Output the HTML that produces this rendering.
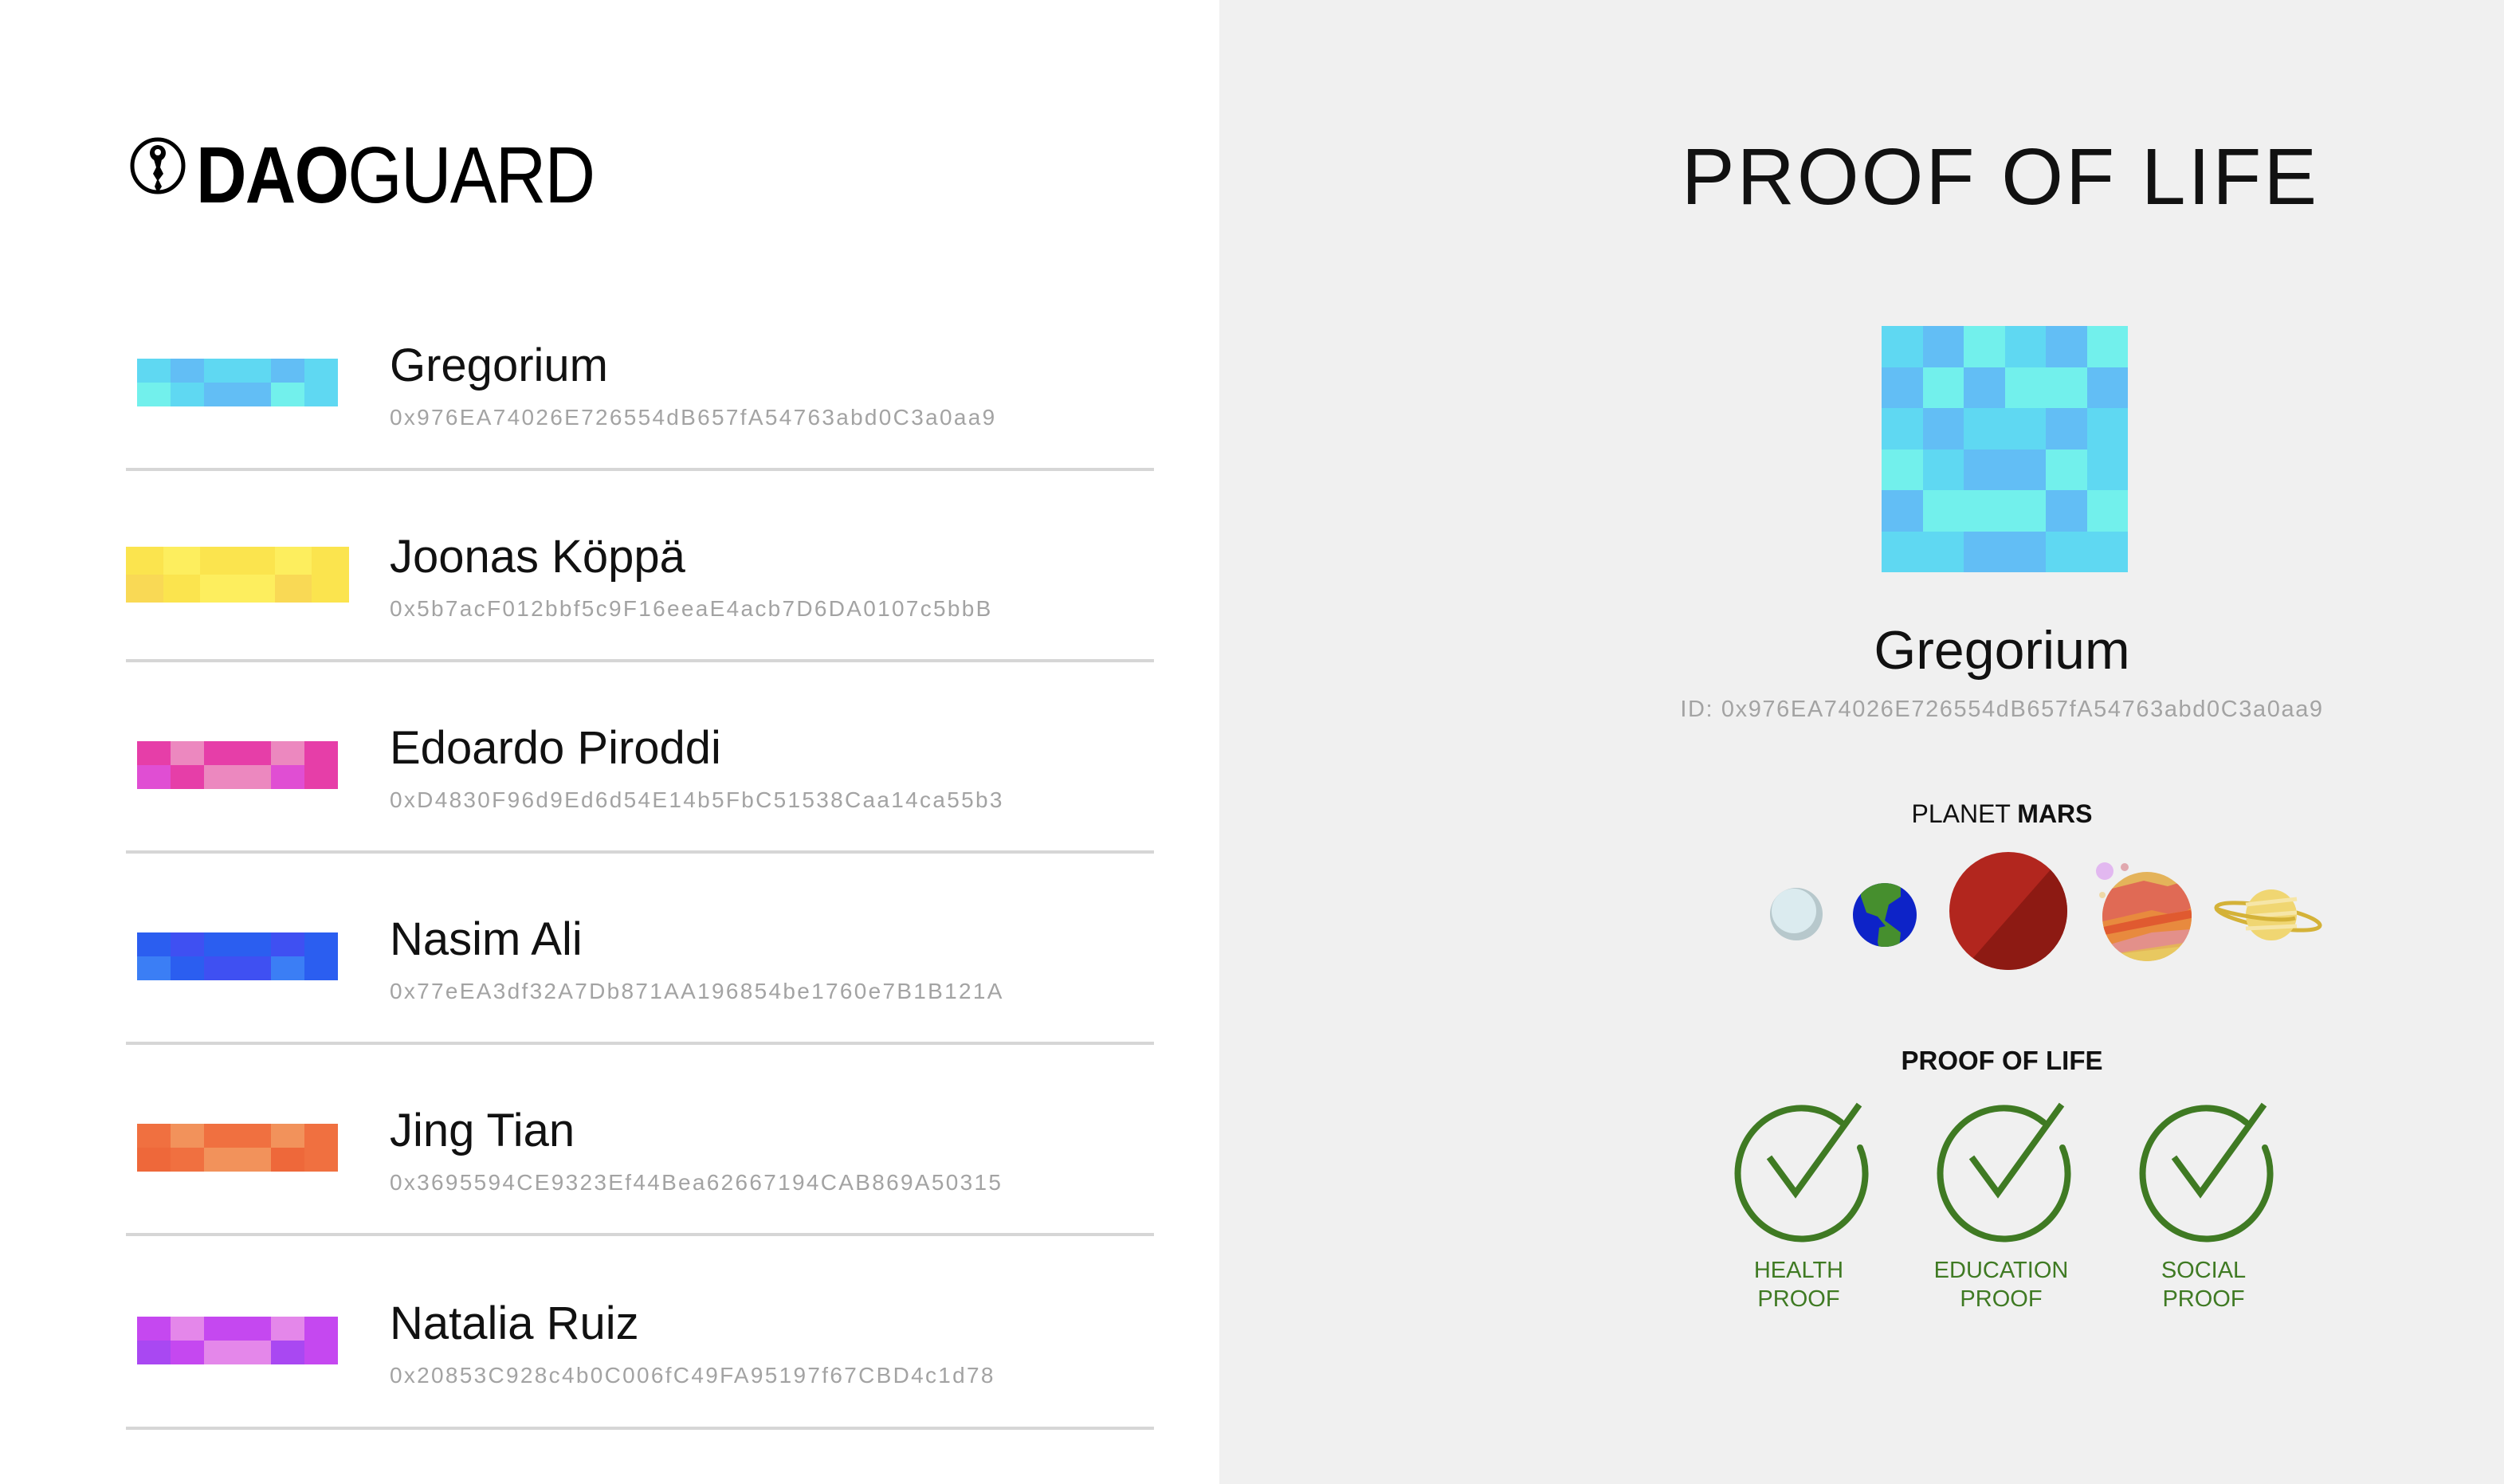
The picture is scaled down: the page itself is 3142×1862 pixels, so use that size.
<!DOCTYPE html>
<html><head><meta charset="utf-8"><style>
*{margin:0;padding:0;box-sizing:border-box}
body{width:3142px;height:1862px;position:relative;background:#fff;font-family:"Liberation Sans",sans-serif;overflow:hidden}
.right{position:absolute;left:1530px;top:0;width:1612px;height:1862px;background:#f0f0f0}
.a{position:absolute}
.t{position:absolute;line-height:1;white-space:nowrap}
.name{font-size:58px;color:#111;left:489px}
.addr{font-size:28px;color:#a3a3a3;left:489px;letter-spacing:2.3px}
.line{position:absolute;left:158px;width:1290px;height:4px;background:#d6d6d6}
.grid{position:absolute;display:grid}
.grid div{width:100%;height:100%}
.c{text-align:center;transform:translateX(-50%)}
.lbl{font-size:29px;color:#3f7a23;text-align:center;line-height:36px;transform:translateX(-50%)}
</style></head><body>
<div class="right"></div>

<!-- logo -->
<svg class="a" style="left:160px;top:170px" width="80" height="80" viewBox="0 0 80 80">
<ellipse cx="38" cy="38" rx="32" ry="33" fill="none" stroke="#000" stroke-width="5"/>
<circle cx="38" cy="22" r="10" fill="#000"/>
<circle cx="38" cy="21" r="4" fill="#fff"/>
<path d="M33 30 L43 30 L41 40 L45 48 L39 56 L43 64 L38 72 L34 64 L37 56 L32 48 L36 40 Z" fill="#000"/>
</svg>
<div class="t" style="left:246px;top:170px;font-size:100px;letter-spacing:-2px;transform:scaleX(0.88);transform-origin:0 0"><b>DAO</b>GUARD</div>

<!-- rows -->
<div class="grid" style="left:172px;top:450px;width:252px;height:60px;grid-template-columns:repeat(6,1fr);grid-template-rows:1fr 1fr">
<div style="background:#5fd8f2"></div><div style="background:#62bef5"></div><div style="background:#5fd8f2"></div><div style="background:#5fd8f2"></div><div style="background:#62bef5"></div><div style="background:#5fd8f2"></div>
<div style="background:#72f0ec"></div><div style="background:#5fd8f2"></div><div style="background:#62bef5"></div><div style="background:#62bef5"></div><div style="background:#72f0ec"></div><div style="background:#5fd8f2"></div></div>
<div class="t name" style="top:430px">Gregorium</div>
<div class="t addr" style="top:510px">0x976EA74026E726554dB657fA54763abd0C3a0aa9</div>
<div class="line" style="top:587px"></div>

<div class="grid" style="left:158px;top:686px;width:280px;height:70px;grid-template-columns:repeat(6,1fr);grid-template-rows:1fr 1fr">
<div style="background:#fbe44e"></div><div style="background:#fdee5e"></div><div style="background:#fbe44e"></div><div style="background:#fbe44e"></div><div style="background:#fdee5e"></div><div style="background:#fbe44e"></div>
<div style="background:#f9d955"></div><div style="background:#fbe44e"></div><div style="background:#fdee5e"></div><div style="background:#fdee5e"></div><div style="background:#f9d955"></div><div style="background:#fbe44e"></div></div>
<div class="t name" style="top:670px">Joonas Köppä</div>
<div class="t addr" style="top:750px">0x5b7acF012bbf5c9F16eeaE4acb7D6DA0107c5bbB</div>
<div class="line" style="top:827px"></div>

<div class="grid" style="left:172px;top:930px;width:252px;height:60px;grid-template-columns:repeat(6,1fr);grid-template-rows:1fr 1fr">
<div style="background:#e63ea8"></div><div style="background:#ec88bf"></div><div style="background:#e63ea8"></div><div style="background:#e63ea8"></div><div style="background:#ec88bf"></div><div style="background:#e63ea8"></div>
<div style="background:#e04ed3"></div><div style="background:#e63ea8"></div><div style="background:#ec88bf"></div><div style="background:#ec88bf"></div><div style="background:#e04ed3"></div><div style="background:#e63ea8"></div></div>
<div class="t name" style="top:910px">Edoardo Piroddi</div>
<div class="t addr" style="top:990px">0xD4830F96d9Ed6d54E14b5FbC51538Caa14ca55b3</div>
<div class="line" style="top:1067px"></div>

<div class="grid" style="left:172px;top:1170px;width:252px;height:60px;grid-template-columns:repeat(6,1fr);grid-template-rows:1fr 1fr">
<div style="background:#2b5ef0"></div><div style="background:#3f50f2"></div><div style="background:#2b5ef0"></div><div style="background:#2b5ef0"></div><div style="background:#3f50f2"></div><div style="background:#2b5ef0"></div>
<div style="background:#3b7ef5"></div><div style="background:#2b5ef0"></div><div style="background:#3f50f2"></div><div style="background:#3f50f2"></div><div style="background:#3b7ef5"></div><div style="background:#2b5ef0"></div></div>
<div class="t name" style="top:1150px">Nasim Ali</div>
<div class="t addr" style="top:1230px">0x77eEA3df32A7Db871AA196854be1760e7B1B121A</div>
<div class="line" style="top:1307px"></div>

<div class="grid" style="left:172px;top:1410px;width:252px;height:60px;grid-template-columns:repeat(6,1fr);grid-template-rows:1fr 1fr">
<div style="background:#f07040"></div><div style="background:#f2925b"></div><div style="background:#f07040"></div><div style="background:#f07040"></div><div style="background:#f2925b"></div><div style="background:#f07040"></div>
<div style="background:#ee683a"></div><div style="background:#f07040"></div><div style="background:#f2925b"></div><div style="background:#f2925b"></div><div style="background:#ee683a"></div><div style="background:#f07040"></div></div>
<div class="t name" style="top:1390px">Jing Tian</div>
<div class="t addr" style="top:1470px">0x3695594CE9323Ef44Bea62667194CAB869A50315</div>
<div class="line" style="top:1547px"></div>

<div class="grid" style="left:172px;top:1652px;width:252px;height:60px;grid-template-columns:repeat(6,1fr);grid-template-rows:1fr 1fr">
<div style="background:#c548f0"></div><div style="background:#e487ea"></div><div style="background:#c548f0"></div><div style="background:#c548f0"></div><div style="background:#e487ea"></div><div style="background:#c548f0"></div>
<div style="background:#a948f2"></div><div style="background:#c548f0"></div><div style="background:#e487ea"></div><div style="background:#e487ea"></div><div style="background:#a948f2"></div><div style="background:#c548f0"></div></div>
<div class="t name" style="top:1632px">Natalia Ruiz</div>
<div class="t addr" style="top:1712px">0x20853C928c4b0C006fC49FA95197f67CBD4c1d78</div>
<div class="line" style="top:1790px"></div>

<!-- right -->
<div class="t c" style="left:2510px;top:172px;font-size:100px;letter-spacing:3px;color:#111">PROOF OF LIFE</div>

<div class="grid" style="left:2361px;top:409px;width:309px;height:309px;grid-template-columns:repeat(6,1fr);grid-template-rows:repeat(6,1fr)">
<div style="background:#5fd8f2"></div><div style="background:#62bef5"></div><div style="background:#72f0ec"></div><div style="background:#5fd8f2"></div><div style="background:#62bef5"></div><div style="background:#72f0ec"></div>
<div style="background:#62bef5"></div><div style="background:#72f0ec"></div><div style="background:#62bef5"></div><div style="background:#72f0ec"></div><div style="background:#72f0ec"></div><div style="background:#62bef5"></div>
<div style="background:#5fd8f2"></div><div style="background:#62bef5"></div><div style="background:#5fd8f2"></div><div style="background:#5fd8f2"></div><div style="background:#62bef5"></div><div style="background:#5fd8f2"></div>
<div style="background:#72f0ec"></div><div style="background:#5fd8f2"></div><div style="background:#62bef5"></div><div style="background:#62bef5"></div><div style="background:#72f0ec"></div><div style="background:#5fd8f2"></div>
<div style="background:#62bef5"></div><div style="background:#72f0ec"></div><div style="background:#72f0ec"></div><div style="background:#72f0ec"></div><div style="background:#62bef5"></div><div style="background:#72f0ec"></div>
<div style="background:#5fd8f2"></div><div style="background:#5fd8f2"></div><div style="background:#62bef5"></div><div style="background:#62bef5"></div><div style="background:#5fd8f2"></div><div style="background:#5fd8f2"></div>
</div>

<div class="t c" style="left:2512px;top:782px;font-size:68px;color:#111">Gregorium</div>
<div class="t c" style="left:2512px;top:876px;font-size:29px;color:#a3a3a3;letter-spacing:1.6px">ID: 0x976EA74026E726554dB657fA54763abd0C3a0aa9</div>

<div class="t c" style="left:2512px;top:1005px;font-size:32px;color:#111">PLANET <b>MARS</b></div>

<svg class="a" style="left:2200px;top:1060px" width="740" height="170" viewBox="2200 1060 740 170">
<circle cx="2254" cy="1147" r="33" fill="#b7c8cc"/>
<circle cx="2251" cy="1143" r="28" fill="#dbebef"/>
<clipPath id="e"><circle cx="2365" cy="1148" r="40"/></clipPath>
<circle cx="2365" cy="1148" r="40" fill="#0d23c8"/>
<path clip-path="url(#e)" d="M2335 1100 L2385 1100 L2385 1125 L2370 1135 L2365 1155 L2385 1170 L2383 1190 L2372 1200 L2360 1200 L2356 1182 L2358 1164 L2366 1162 L2356 1150 L2342 1145 L2335 1125Z" fill="#468f2e"/>
<clipPath id="m"><circle cx="2520" cy="1143" r="74"/></clipPath>
<circle cx="2520" cy="1143" r="74" fill="#b2261e"/>
<path clip-path="url(#m)" d="M2574 1090 L2600 1090 L2600 1220 L2460 1220 Z" fill="#8d1a13"/>
<clipPath id="j"><circle cx="2694" cy="1150" r="56"/></clipPath>
<circle cx="2694" cy="1150" r="56" fill="#e4b35a"/>
<g clip-path="url(#j)">
<path d="M2630 1120 L2690 1105 L2720 1112 L2760 1100 L2760 1140 L2700 1150 L2630 1160Z" fill="#e06a55"/>
<path d="M2630 1158 L2700 1142 L2735 1150 L2760 1130 L2760 1170 L2630 1195Z" fill="#e88a3e"/>
<path d="M2630 1165 L2700 1150 L2760 1140 L2760 1150 L2630 1175Z" fill="#e05a30"/>
<path d="M2630 1190 L2700 1170 L2760 1165 L2760 1180 L2630 1200Z" fill="#e3908a"/>
<path d="M2630 1200 L2760 1185 L2760 1210 L2630 1210Z" fill="#e8c860"/>
</g>
<ellipse cx="2641" cy="1093" rx="11" ry="11" fill="#e2b8f0"/>
<circle cx="2666" cy="1088" r="5" fill="#e0a8ae"/>
<circle cx="2638" cy="1123" r="4" fill="#efd9a8"/>
<ellipse cx="2846" cy="1150" rx="66" ry="13" transform="rotate(10 2846 1150)" fill="none" stroke="#d4b238" stroke-width="5"/>
<ellipse cx="2850" cy="1148" rx="32" ry="32" fill="#f0d672"/>
<path d="M2818 1135 L2882 1128 M2818 1150 L2882 1145 M2818 1165 L2882 1162" stroke="#f6e6a8" stroke-width="5"/>
<path d="M2880 1152 A66 13 10 0 1 2780 1140" fill="none" stroke="#d4b238" stroke-width="5"/>
</svg>

<div class="t c" style="left:2512px;top:1314px;font-size:33px;font-weight:bold;color:#111">PROOF OF LIFE</div>

<svg class="a" style="left:2150px;top:1360px" width="740" height="200" viewBox="2150 1360 740 200">
<g fill="none" stroke="#3f7a23" stroke-width="8">
<g transform="translate(2258 1463)"><path d="M52 -55 A80 82 0 1 0 76 -23" stroke-linecap="round"/><path d="M-38 -11 L-5 34 L75 -77"/></g>
<g transform="translate(2512 1463)"><path d="M52 -55 A80 82 0 1 0 76 -23" stroke-linecap="round"/><path d="M-38 -11 L-5 34 L75 -77"/></g>
<g transform="translate(2766 1463)"><path d="M52 -55 A80 82 0 1 0 76 -23" stroke-linecap="round"/><path d="M-38 -11 L-5 34 L75 -77"/></g>
</g></svg>

<div class="t lbl" style="left:2257px;top:1576px">HEALTH<br>PROOF</div>
<div class="t lbl" style="left:2511px;top:1576px">EDUCATION<br>PROOF</div>
<div class="t lbl" style="left:2765px;top:1576px">SOCIAL<br>PROOF</div>
</body></html>
